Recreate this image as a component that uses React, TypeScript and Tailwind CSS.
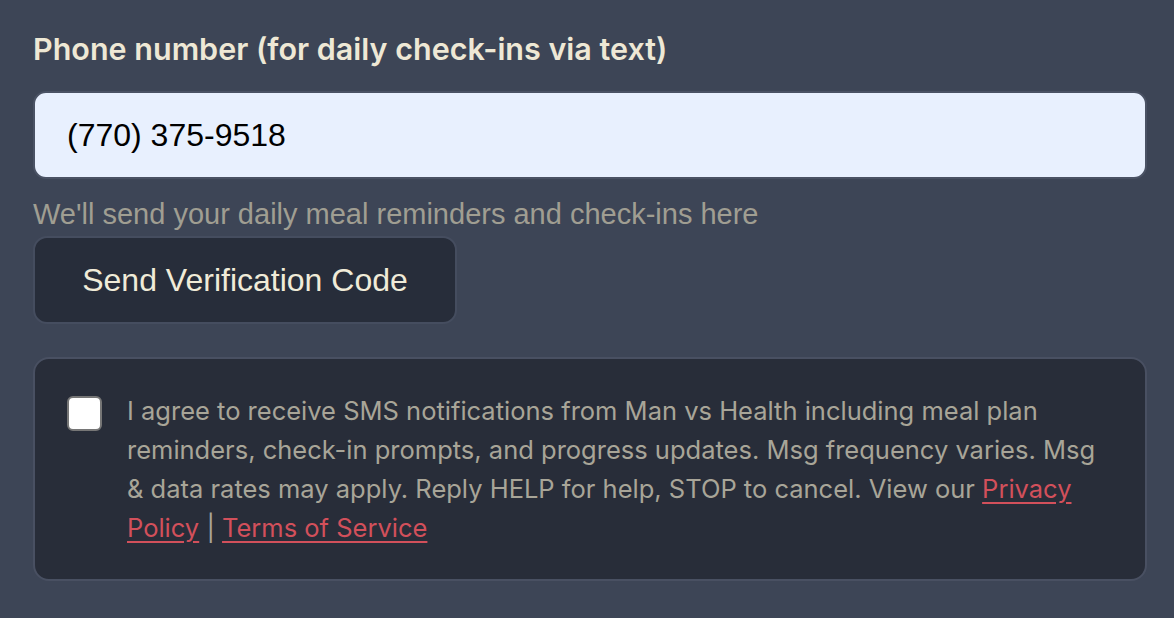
import React from "react";

export default function App() {
  return (
    <div className="w-[1174px] h-[618px] overflow-hidden bg-[#3d4556] pl-[33px] pr-[27px] pt-[29px]">
      <label
        className="block text-[30.5px] leading-[40px] font-semibold text-[#eee8d5]"
        style={{ fontFamily: "Inter, 'Noto Sans', sans-serif" }}
      >
        Phone number (for daily check-ins via text)
      </label>
      <div className="mt-[22px] h-[88px] rounded-[13px] border-2 border-[#4a5264] bg-[#e8f0fe] flex items-center pl-[32px]">
        <span
          className="text-[32px] text-black"
          style={{ fontFamily: "'Liberation Sans', Arial, sans-serif" }}
        >
          (770) 375-9518
        </span>
      </div>
      <p
        className="mt-[18px] text-[29px] leading-[34px] text-[#a09e92]"
        style={{ fontFamily: "'Liberation Sans', Arial, sans-serif" }}
      >
        We'll send your daily meal reminders and check-ins here
      </p>
      <button
        className="block mt-[5px] w-[424px] h-[88px] rounded-[14px] border-2 border-[#454d5f] bg-[#272d3a] text-[32px] text-[#f0ebd8]"
        style={{ fontFamily: "'Liberation Sans', Arial, sans-serif" }}
      >
        Send Verification Code
      </button>
      <div className="mt-[33px] h-[224px] rounded-[16px] border-2 border-[#495062] bg-[#282d39] flex pl-[32px] pr-[40px] pt-[37px]">
        <div className="shrink-0 w-[35px] h-[35px] rounded-[6px] bg-white border-2 border-[#767676]" />
        <p
          className="ml-[25px] -mt-[5px] text-[25.5px] leading-[39px] text-[#a8a598]"
          style={{ fontFamily: "Inter, 'Noto Sans', sans-serif" }}
        >
          I agree to receive SMS notifications from Man vs Health including meal plan reminders, check-in prompts, and progress updates. Msg frequency varies. Msg &amp; data rates may apply. Reply HELP for help, STOP to cancel. View our{" "}
          <a className="text-[#d2505b] underline underline-offset-[4px]">Privacy Policy</a> |{" "}
          <a className="text-[#d2505b] underline underline-offset-[4px]">Terms of Service</a>
        </p>
      </div>
    </div>
  );
}
